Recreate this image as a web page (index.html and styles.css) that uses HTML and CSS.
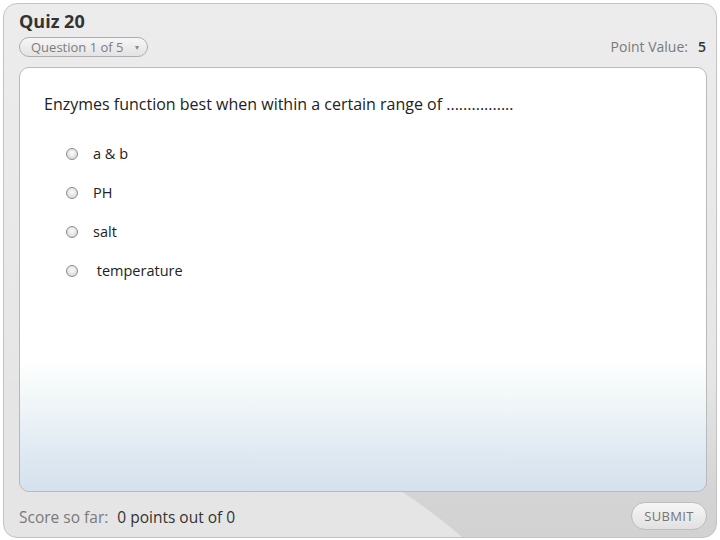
FILE: index.html
```html
<!DOCTYPE html>
<html lang="en">
<head>
<meta charset="utf-8">
<title>Quiz 20</title>
<link rel="stylesheet" href="styles.css">
</head>
<body>
<div class="frame">
  <h1 class="title">Quiz 20</h1>
  <div class="meta">
    <div class="picker"><span>Question 1 of 5</span><span class="caret">&#9662;</span></div>
    <div class="points"><span class="muted">Point Value:</span><span class="value">5</span></div>
  </div>
  <div class="card">
    <p class="question">Enzymes function best when within a certain range of ................</p>
    <ul class="options">
      <li class="option"><span class="radio"></span><span class="label">a &amp; b</span></li>
      <li class="option"><span class="radio"></span><span class="label">PH</span></li>
      <li class="option"><span class="radio"></span><span class="label">salt</span></li>
      <li class="option"><span class="radio"></span><span class="label">&nbsp;temperature</span></li>
    </ul>
  </div>
  <div class="footer">
    <div class="score"><span class="muted">Score so far:</span><span class="value">0 points out of 0</span></div>
    <div class="submit">SUBMIT</div>
  </div>
</div>
</body>
</html>
```

FILE: styles.css
```css
html, body {
  margin: 0;
  padding: 0;
  width: 720px;
  height: 540px;
  overflow: hidden;
  background: #ffffff;
  font-family: "Open Sans", "DejaVu Sans", sans-serif;
}

.frame {
  box-sizing: border-box;
  margin: 3px 3px 0 3px;
  height: 535px;
  border: 1px solid #c3c3c3;
  border-radius: 14px;
  padding: 6px 9px 0 15px;
  display: flex;
  flex-direction: column;
  background:
    radial-gradient(ellipse 590px 420px at 0px 797px, #e5e5e5 99.7%, rgba(229,229,229,0) 100%),
    linear-gradient(to bottom, #ececec 0%, #e6e6e6 70%, #d4d4d4 92%, #d2d2d2 100%);
}

.title {
  margin: 0;
  font-size: 18px;
  line-height: 22px;
  font-weight: 700;
  color: #333333;
}

.meta {
  margin-top: 5px;
  height: 20px;
  display: flex;
  align-items: center;
  justify-content: space-between;
}

.picker {
  box-sizing: border-box;
  width: 129px;
  height: 20px;
  border: 1px solid #adadad;
  border-radius: 10px;
  background: linear-gradient(to bottom, #f6f6f6, #e3e3e3);
  display: flex;
  align-items: center;
  justify-content: space-between;
  padding: 0 8px 0 11px;
  font-size: 13px;
  color: #7d7d7d;
  line-height: 18px;
}

.caret {
  font-size: 8px;
  color: #888888;
}

.points {
  display: flex;
  align-items: center;
  gap: 10px;
  font-size: 14px;
  line-height: 20px;
  padding-right: 1px;
}

.muted {
  color: #7a7a7a;
}

.value {
  color: #333333;
}

.points .value {
  font-weight: 600;
}

.card {
  box-sizing: border-box;
  margin-top: 10px;
  height: 425px;
  border: 1px solid #b9b9b9;
  border-radius: 10px;
  padding: 26px 24px 0 24px;
  background: linear-gradient(to bottom, #ffffff 0%, #ffffff 69%, #f7fbfb 74%, #eaf1f6 84%, #dde7f1 93%, #d4e2ee 100%);
}

.question {
  margin: 0;
  font-size: 16px;
  line-height: 21px;
  color: #222222;
}

.options {
  list-style: none;
  margin: 29px 0 0 22px;
  padding: 0;
  display: flex;
  flex-direction: column;
  gap: 19px;
}

.option {
  display: flex;
  align-items: center;
  height: 20px;
}

.radio {
  box-sizing: border-box;
  width: 12px;
  height: 12px;
  border-radius: 50%;
  border: 1px solid #8c8c8c;
  background: radial-gradient(circle at 50% 40%, #fbfbfb 0%, #e6e6e6 50%, #cfcfcf 100%);
  flex: none;
}

.label {
  margin-left: 15px;
  font-size: 14.5px;
  line-height: 20px;
  color: #222222;
}

.footer {
  margin-top: 10px;
  height: 28px;
  display: flex;
  align-items: center;
  justify-content: space-between;
}

.score {
  display: flex;
  gap: 9px;
  font-size: 15.5px;
  line-height: 20px;
  padding-top: 2px;
}

.submit {
  box-sizing: border-box;
  width: 76px;
  height: 28px;
  border: 1px solid #bdbdbd;
  border-radius: 14px;
  background: linear-gradient(to bottom, #f6f6f6, #e1e1e1);
  color: #767676;
  font-size: 13px;
  line-height: 26px;
  text-align: center;
  letter-spacing: 0.3px;
}
```
